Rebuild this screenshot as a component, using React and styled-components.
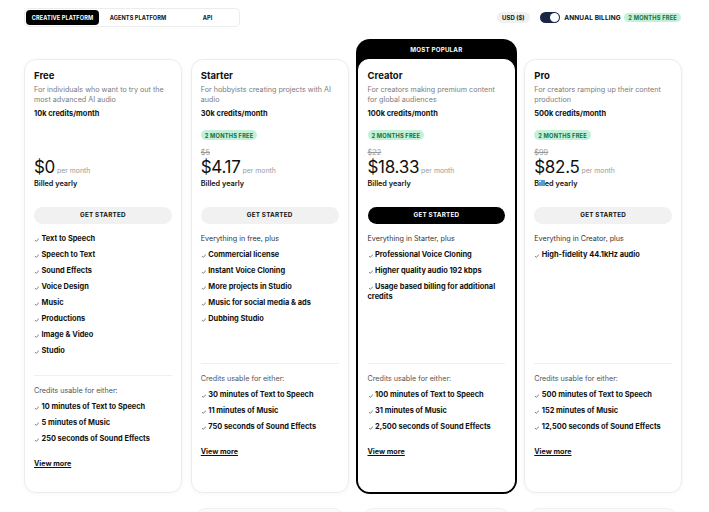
import React from "react";
import styled, { createGlobalStyle } from "styled-components";

const GlobalStyle = createGlobalStyle`
  body {
    margin: 0;
    background: #fff;
    font-family: Inter, "Noto Sans", sans-serif;
    color: #111;
    -webkit-font-smoothing: antialiased;
  }
  * { box-sizing: border-box; }
`;

const Page = styled.div`
  height: 512px;
  overflow: hidden;
  padding: 8px 27px 0 24px;
`;

const TopBar = styled.div`
  display: flex;
  justify-content: space-between;
  align-items: center;
  height: 19px;
`;

const Tabs = styled.div`
  display: flex;
  width: 216px;
  height: 19px;
  padding: 1px;
  border: 1px solid #ececec;
  border-radius: 5px;
`;

const Tab = styled.button`
  width: ${(p) => p.$w}px;
  padding: 0;
  border: 0;
  border-radius: 4px;
  background: ${(p) => (p.$active ? "#000" : "transparent")};
  color: ${(p) => (p.$active ? "#fff" : "#111")};
  font-family: Inter, sans-serif;
  font-size: 5.6px;
  font-weight: 700;
  letter-spacing: 0.1px;
  text-transform: uppercase;
`;

const Controls = styled.div`
  display: flex;
  align-items: center;
  margin-right: 1px;
`;

const Currency = styled.div`
  display: flex;
  align-items: center;
  height: 11.5px;
  padding: 0 5.5px;
  border-radius: 6px;
  background: #f0f0f0;
  font-size: 6px;
  font-weight: 700;
  margin-right: 10px;
`;

const Toggle = styled.div`
  display: flex;
  justify-content: flex-end;
  align-items: center;
  width: 20px;
  height: 11.5px;
  padding: 1px;
  border-radius: 6px;
  background: #1b2544;
  margin-right: 4px;
`;

const Knob = styled.div`
  width: 9.5px;
  height: 9.5px;
  border-radius: 50%;
  background: #fff;
`;

const BillingLabel = styled.span`
  font-size: 6.5px;
  font-weight: 700;
  letter-spacing: 0.15px;
  margin-right: 3.5px;
`;

const Badge = styled.span`
  display: inline-flex;
  align-items: center;
  height: 9.5px;
  padding: 0 4px;
  border-radius: 5px;
  background: #c3f1d7;
  color: #137048;
  font-size: 5.7px;
  font-weight: 700;
  letter-spacing: 0.2px;
  text-transform: uppercase;
  white-space: nowrap;
`;

const Plans = styled.div`
  display: grid;
  grid-template-columns: repeat(4, 1fr);
  column-gap: 9px;
  margin-top: 32px;
`;

const Popular = styled.div`
  display: flex;
  flex-direction: column;
  margin: -20px -2px -1px;
  padding: 0 2px 2px;
  border-radius: 14px;
  background: #000;
`;

const PopularHead = styled.div`
  display: flex;
  align-items: center;
  justify-content: center;
  height: 20px;
  color: #fff;
  font-size: 6.2px;
  font-weight: 700;
  letter-spacing: 0.2px;
  text-transform: uppercase;
`;

const Card = styled.div`
  flex: 1;
  display: flex;
  flex-direction: column;
  padding: 9px 9px 23px;
  background: #fff;
  border: 1px solid ${(p) => (p.$framed ? "#fff" : "#ececec")};
  border-radius: ${(p) => (p.$framed ? "11px" : "12px")};
  box-shadow: ${(p) => (p.$framed ? "none" : "0 1px 4px rgba(0,0,0,0.04)")};
`;

const Title = styled.div`
  font-size: 9.5px;
  line-height: 13px;
  font-weight: 700;
`;

const Desc = styled.div`
  margin-top: 3px;
  font-size: 7.2px;
  line-height: 10.4px;
  color: #7c7c7c;
`;

const Credits = styled.div`
  margin-top: 3.4px;
  font-size: 7.4px;
  line-height: 10px;
  font-weight: 700;
`;

const PriceArea = styled.div`
  display: flex;
  flex-direction: column;
  justify-content: flex-end;
  align-items: flex-start;
  height: 59px;
  margin-top: 10.7px;
  ${Badge} {
    margin-bottom: 7.7px;
  }
`;

const OldPrice = styled.div`
  font-size: 7.4px;
  line-height: 10px;
  color: #9a9a9a;
  text-decoration: line-through;
`;

const PriceRow = styled.div`
  display: flex;
  align-items: baseline;
`;

const Price = styled.span`
  font-size: 17px;
  line-height: 18px;
  letter-spacing: -0.3px;
`;

const Per = styled.span`
  margin-left: 2px;
  font-size: 6.9px;
  color: #9a9a9a;
`;

const Billed = styled.div`
  margin-top: 3.3px;
  font-size: 7.3px;
  line-height: 10px;
  font-weight: 600;
`;

const Button = styled.button`
  height: 17.5px;
  margin-top: 17.7px;
  border: 0;
  border-radius: 9px;
  background: ${(p) => (p.$dark ? "#000" : "#f1f1f1")};
  color: ${(p) => (p.$dark ? "#fff" : "#111")};
  font-family: Inter, sans-serif;
  font-size: 6.3px;
  font-weight: 700;
  letter-spacing: 0.2px;
  text-transform: uppercase;
`;

const List = styled.ul`
  display: flex;
  flex-direction: column;
  gap: 6px;
  margin: ${(p) => p.$top}px 0 0;
  padding: 0;
  list-style: none;
  min-height: ${(p) => p.$min || 0}px;
`;

const Item = styled.li`
  font-size: 7.4px;
  line-height: 10px;
  font-weight: 700;
`;

const Lead = styled.li`
  font-size: 7.2px;
  line-height: 10px;
  color: #333;
`;

const CheckMark = styled.svg`
  display: inline-block;
  width: 4px;
  height: 4px;
  margin: 0 2.5px 0 1px;
  vertical-align: -0.5px;
`;

const Divider = styled.div`
  height: 1px;
  margin-top: 19px;
  background: #efefef;
`;

const UsableLabel = styled.div`
  margin-top: 10px;
  font-size: 7.2px;
  line-height: 10px;
  color: #555;
`;

const ViewMore = styled.a`
  align-self: flex-start;
  margin-top: 15px;
  font-size: 7.2px;
  line-height: 10px;
  font-weight: 700;
  color: #111;
  text-decoration: underline;
`;

const NextRow = styled.div`
  display: grid;
  grid-template-columns: repeat(4, 1fr);
  column-gap: 9px;
  margin-top: 15px;
`;

const Ghost = styled.div`
  grid-column: ${(p) => p.$col};
  height: 30px;
  margin: 0 5px;
  border: 1px solid #f0f0f0;
  border-radius: 10px;
  background: #fafafa;
`;

const Check = () => (
  <CheckMark viewBox="0 0 4 4">
    <path d="M0.3 2.3 L1.4 3.4 L3.7 0.7" fill="none" stroke="#666" strokeWidth="0.8" strokeLinecap="round" strokeLinejoin="round" />
  </CheckMark>
);

const plans = [
  {
    name: "Free",
    desc: "For individuals who want to try out the most advanced AI audio",
    credits: "10k credits/month",
    price: "$0",
    features: ["Text to Speech", "Speech to Text", "Sound Effects", "Voice Design", "Music", "Productions", "Image & Video", "Studio"],
    usable: ["10 minutes of Text to Speech", "5 minutes of Music", "250 seconds of Sound Effects"],
  },
  {
    name: "Starter",
    desc: "For hobbyists creating projects with AI audio",
    credits: "30k credits/month",
    old: "$5",
    price: "$4.17",
    lead: "Everything in free, plus",
    features: ["Commercial license", "Instant Voice Cloning", "More projects in Studio", "Music for social media & ads", "Dubbing Studio"],
    usable: ["30 minutes of Text to Speech", "11 minutes of Music", "750 seconds of Sound Effects"],
  },
  {
    name: "Creator",
    popular: true,
    desc: "For creators making premium content for global audiences",
    credits: "100k credits/month",
    old: "$22",
    price: "$18.33",
    lead: "Everything in Starter, plus",
    features: ["Professional Voice Cloning", "Higher quality audio 192 kbps", "Usage based billing for additional credits"],
    usable: ["100 minutes of Text to Speech", "31 minutes of Music", "2,500 seconds of Sound Effects"],
  },
  {
    name: "Pro",
    desc: "For creators ramping up their content production",
    credits: "500k credits/month",
    old: "$99",
    price: "$82.5",
    lead: "Everything in Creator, plus",
    features: ["High-fidelity 44.1kHz audio"],
    usable: ["500 minutes of Text to Speech", "152 minutes of Music", "12,500 seconds of Sound Effects"],
  },
];

function PlanCard({ plan }) {
  return (
    <Card $framed={plan.popular}>
      <Title>{plan.name}</Title>
      <Desc>{plan.desc}</Desc>
      <Credits>{plan.credits}</Credits>
      <PriceArea>
        {plan.old && <Badge>2 months free</Badge>}
        {plan.old && <OldPrice>{plan.old}</OldPrice>}
        <PriceRow>
          <Price>{plan.price}</Price>
          <Per>per month</Per>
        </PriceRow>
        <Billed>Billed yearly</Billed>
      </PriceArea>
      <Button $dark={plan.popular}>Get started</Button>
      <List $top={10.3} $min={110}>
        {plan.lead && <Lead>{plan.lead}</Lead>}
        {plan.features.map((f) => (
          <Item key={f}>
            <Check />
            {f}
          </Item>
        ))}
      </List>
      <Divider />
      <UsableLabel>Credits usable for either:</UsableLabel>
      <List $top={6}>
        {plan.usable.map((u) => (
          <Item key={u}>
            <Check />
            {u}
          </Item>
        ))}
      </List>
      <ViewMore href="#">View more</ViewMore>
    </Card>
  );
}

export default function App() {
  return (
    <Page>
      <GlobalStyle />
      <TopBar>
        <Tabs>
          <Tab $w={73} $active>Creative platform</Tab>
          <Tab $w={78}>Agents platform</Tab>
          <Tab $w={61}>API</Tab>
        </Tabs>
        <Controls>
          <Currency>USD ($)</Currency>
          <Toggle>
            <Knob />
          </Toggle>
          <BillingLabel>ANNUAL BILLING</BillingLabel>
          <Badge>2 months free</Badge>
        </Controls>
      </TopBar>
      <Plans>
        {plans.map((p) =>
          p.popular ? (
            <Popular key={p.name}>
              <PopularHead>Most popular</PopularHead>
              <PlanCard plan={p} />
            </Popular>
          ) : (
            <PlanCard key={p.name} plan={p} />
          )
        )}
      </Plans>
      <NextRow>
        <Ghost $col={2} />
        <Ghost $col={3} />
        <Ghost $col={4} />
      </NextRow>
    </Page>
  );
}
